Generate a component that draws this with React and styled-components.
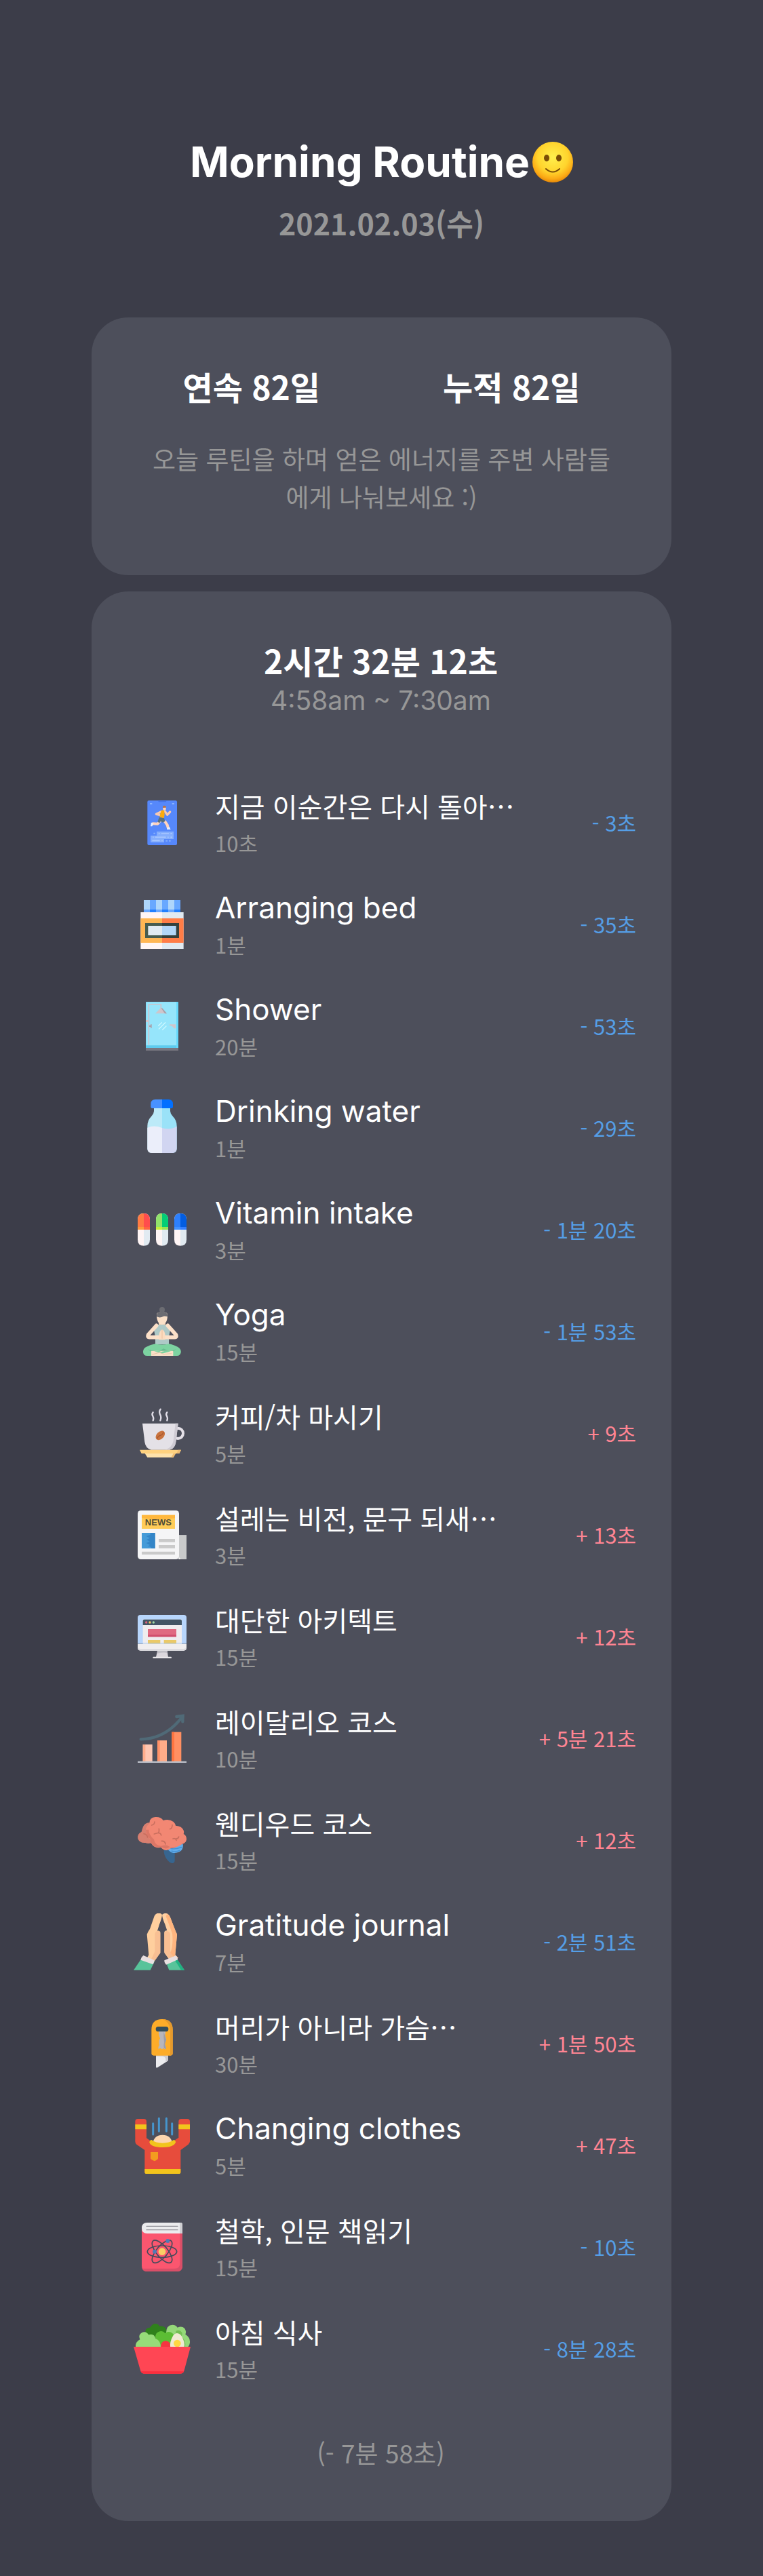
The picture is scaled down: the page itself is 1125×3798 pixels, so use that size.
import React from "react";
import styled, { createGlobalStyle } from "styled-components";

const routines = [
  { icon: "poster", title: "지금 이순간은 다시 돌아⋯", time: "10초", diff: "- 3초" },
  { icon: "jar", title: "Arranging bed", latin: true, time: "1분", diff: "- 35초" },
  { icon: "shower", title: "Shower", latin: true, time: "20분", diff: "- 53초" },
  { icon: "bottle", title: "Drinking water", latin: true, time: "1분", diff: "- 29초" },
  { icon: "pills", title: "Vitamin intake", latin: true, time: "3분", diff: "- 1분 20초" },
  { icon: "yoga", title: "Yoga", latin: true, time: "15분", diff: "- 1분 53초" },
  { icon: "coffee", title: "커피/차 마시기", time: "5분", diff: "+ 9초" },
  { icon: "news", title: "설레는 비전, 문구 되새⋯", time: "3분", diff: "+ 13초" },
  { icon: "monitor", title: "대단한 아키텍트", time: "15분", diff: "+ 12초" },
  { icon: "chart", title: "레이달리오 코스", time: "10분", diff: "+ 5분 21초" },
  { icon: "brain", title: "웬디우드 코스", time: "15분", diff: "+ 12초" },
  { icon: "pray", title: "Gratitude journal", latin: true, time: "7분", diff: "- 2분 51초" },
  { icon: "cutter", title: "머리가 아니라 가슴⋯", time: "30분", diff: "+ 1분 50초" },
  { icon: "clothes", title: "Changing clothes", latin: true, time: "5분", diff: "+ 47초" },
  { icon: "book", title: "철학, 인문 책읽기", time: "15분", diff: "- 10초" },
  { icon: "salad", title: "아침 식사", time: "15분", diff: "- 8분 28초" },
];

const icons = {
  poster: (
    <>
      <rect x="61" y="28" width="131" height="197" rx="6" fill="#5688fb" />
      <path d="M107 28h40l-4 6h-32z" fill="#4372e6" />
      <path d="M72 39h10v6H72zM170 39h10v6h-10z" fill="#8ab4ff" />
      <path d="M102 165h75v33h-42v15H75v-30h27zM88 170h8v6h-8zM142 203h8v6h-8zM156 203h8v6h-8z" fill="#85aefc" />
      <path d="M110 174h6M122 174h34M163 174h8M85 190h4M95 190h48M150 190h5M163 190h8M82 205h34M124 205h4" stroke="#a9c8ff" strokeWidth="5" />
      <path d="M121 78l-21 10 14 3M139 76l10 15 12-13" fill="none" stroke="#f7c9b0" strokeWidth="10" strokeLinecap="round" strokeLinejoin="round" />
      <path d="M119 115l-12 16-25-1M137 118l12 18 4 15" fill="none" stroke="#ffd3bd" strokeWidth="12" strokeLinejoin="round" />
      <path d="M123 71l12-1 2 20-3 16-19-4 4-20z" fill="#fdab0b" />
      <path d="M113 102l22 4 4 14-11 5-8-6-5 8-9-5z" fill="#58707e" />
      <rect x="130" y="53" width="13" height="18" rx="5" fill="#ffd3bd" />
      <path d="M129 60v-6q7-8 15 1v4z" fill="#b5734c" />
      <path d="M78 125l11 4-7 13h-7zM148 147l11-2 5 11h-17z" fill="#e7efff" />
    </>
  ),
  jar: (
    <>
      <path d="M45 18h162v54H45z" fill="#68a8ff" />
      <path d="M45 18h27v54H45zM99 18h27v54H99zM153 18h27v54h-27z" fill="#aed6fb" />
      <path d="M45 60h162v12H45z" fill="#2280ff" />
      <path d="M45 60h27v12H45zM99 60h27v12H99zM153 60h27v12h-27z" fill="#69a8ff" />
      <path d="M31 72h95v162H31z" fill="#fff5f5" />
      <path d="M126 72h95v162h-95z" fill="#e1eaf1" />
      <path d="M31 99h95v108H31z" fill="#ffb654" />
      <path d="M126 99h95v108h-95z" fill="#ff7d47" />
      <path d="M51 120h75v66H51z" fill="#475c4f" />
      <path d="M126 120h75v66h-75z" fill="#34413d" />
      <path d="M64 132h62v42H64z" fill="#e1eaf1" />
      <path d="M126 132h62v42h-62z" fill="#b2d7f8" />
    </>
  ),
  shower: (
    <>
      <rect x="54" y="18" width="144" height="216" rx="3" fill="#5ecbee" />
      <path d="M55 19h134v192H55z" fill="#96e5fb" />
      <path d="M189 19h8v203h-8z" fill="#68d9fb" />
      <path d="M54 222h144v12H54z" fill="#787781" />
      <path d="M67 208V30h54v18" fill="none" stroke="#ccc4cc" strokeWidth="5" />
      <path d="M121 44l25 26H96z" fill="#cfc5cb" />
      <path d="M121 44l7 3 19 23h-9z" fill="#a99fa8" />
      <path d="M159 118h27v18h-8q-3-11-19-13zM54 99h10v9H54z" fill="#cfc5cb" />
      <path d="M69 122h6v-4h5v16h-5v-5h-6z" fill="#a99fa8" />
      <path d="M110 124l14-14M112 138l28-28M128 142l16-16" stroke="#ccf7ff" strokeWidth="4" strokeLinecap="round" />
    </>
  ),
  bottle: (
    <>
      <path d="M90 34h36v203H81q-20 0-20-20V117q0-25 18-43 11-11 11-22z" fill="#bceaf8" />
      <path d="M126 34h36v18q0 11 11 22 18 18 18 43v100q0 20-20 20h-45z" fill="#9ae2f8" />
      <path d="M61 125q29-13 65 1v111H81q-20 0-20-20z" fill="#ebeefa" />
      <path d="M126 126q38 10 65-7v98q0 20-20 20h-45z" fill="#d1d5f1" />
      <path d="M96 0h30v39H82q-6 0-6-7V20Q76 0 96 0z" fill="#4892ff" />
      <path d="M126 0h28q20 0 20 20v12q0 7-6 7h-42z" fill="#0270ff" />
    </>
  ),
  pills: (
    <>
      {[
        ["#ff7b43", "#ff4d4d", "#ff9a3d", "#ff6540"],
        ["#91e36b", "#04ce76", "#c5f03c", "#99e552"],
        ["#2d80fd", "#035de0", "#4292ff", "#347fff"],
      ].map(([left, right, bandLeft, bandRight], i) => (
        <g key={left} transform={`translate(${18 + i * 81} 54)`}>
          <path d="M27 0v143Q0 143 0 116V27Q0 0 27 0z" fill="#fff5f5" />
          <path d="M27 0v143q27 0 27-27V27Q54 0 27 0z" fill="#e1eaf1" />
          <path d="M27 0v60H0V27Q0 0 27 0z" fill={left} />
          <path d="M27 0v60h27V27Q54 0 27 0z" fill={right} />
          <path d="M0 60h27v12H0z" fill={bandLeft} />
          <path d="M27 60h27v12H27z" fill={bandRight} />
        </g>
      ))}
    </>
  ),
  yoga: (
    <>
      <circle cx="126" cy="30" r="12" fill="#6b6c72" />
      <path d="M111 86h30v16h-30z" fill="#f4ceb2" />
      <path d="M98 96h56l10 15-8 38v35H96v-35l-8-38z" fill="#aec9c7" />
      <path d="M101 100L65 140q-5 12 5 12h48M151 100l36 40q5 12-5 12h-48" fill="none" stroke="#fce0c8" strokeWidth="17" strokeLinecap="round" />
      <path d="M126 118q-13 6-14 28v17h28v-17q-1-22-14-28z" fill="#fbdcc0" />
      <path d="M126 118v40" stroke="#ebc09c" strokeWidth="3" />
      <path d="M102 52q0-12 24-13 24 1 24 14 0 27-11 38-13 10-26 0-11-11-11-39z" fill="#fae0c8" />
      <path d="M102 60q-2-22 24-22t24 22q-10-2-18-1-16 10-30 1z" fill="#6b6c72" />
      <path d="M96 181q30 7 60 0 19 3 40 14 16 11 13 25-3 14-17 14H60q-16 0-18-16-1-15 13-23 20-11 41-14z" fill="#7dd3a1" />
      <path d="M63 205q45 17 69-3 28 17 56 3l-13 10H78z" fill="#67bd8f" />
      <path d="M78 212h97v22H78z" fill="#fae0c8" />
      <path d="M91 214l30-1-12 6 31-7 25 2-39 10z" fill="#7dd3a1" />
      <path d="M82 228l35-9 15 8 36-3" fill="none" stroke="#e8c7aa" strokeWidth="3" />
    </>
  ),
  coffee: (
    <>
      <circle cx="196" cy="127" r="23" fill="none" stroke="#e5e1e8" strokeWidth="12" />
      <path d="M39 83h158l-10 82q-4 29-28 35H78q-25-6-29-35z" fill="#e4e1e7" />
      <path d="M185 83h12l-10 82q-4 29-28 35h-19q30-10 36-40z" fill="#cfcbd3" />
      <path d="M27 200h183l-8 16H35z" fill="#ffd27f" />
      <path d="M50 216h136l-10 17H61z" fill="#fee2ab" />
      <path d="M176 216h10l-10 17h-10zM197 200h13l-8 16h-12z" fill="#eebb72" />
      <ellipse cx="118" cy="136" rx="24" ry="16" transform="rotate(-45 118 136)" fill="#c9733e" />
      <path d="M104 151q3-12 14-15t14-15" fill="none" stroke="#a9562f" strokeWidth="4" />
      <path d="M86 34q-7 8-1 17 5 8 1 19M119 20q-8 10-2 23 7 12 1 27M148 34q-7 8-1 17 5 8 1 19" fill="none" stroke="#e1dee8" strokeWidth="7" strokeLinecap="round" />
    </>
  ),
  news: (
    <>
      <path d="M197 127h37v107h-37z" fill="#c9cacb" />
      <rect x="18" y="18" width="183" height="216" rx="14" fill="#f5f5f6" />
      <path d="M201 210v24h15q-15 0-15-24z" fill="#f5f5f6" />
      <path d="M201 127h33v89q0 18-18 18-15 0-15-15z" fill="#c9cacb" />
      <path d="M36 38h147v61H36z" fill="#ffcc57" />
      <path d="M36 38h147v13q-60 15-147 0z" fill="#ffb83e" />
      <text x="109" y="83" textAnchor="middle" fontFamily="Liberation Sans, sans-serif" fontWeight="700" fontSize="39" fill="#4d4c36">NEWS</text>
      <path d="M36 117h59v69H36z" fill="#459bd8" />
      <path d="M74 117h21v69H80l-7-8h-10l9-8-16-8 16-6-14-9 14-7-16-8 18-7z" fill="#3385c7" />
      <path d="M111 144h72v14h-72zM111 171h72v14h-72zM36 200h147v13H36z" fill="#cacaca" />
    </>
  ),
  monitor: (
    <>
      <path d="M106 185h42l5 32h-54z" fill="#dbd7dd" />
      <path d="M106 185h42l3 15q-12-7-46 0z" fill="#c0bfc6" />
      <rect x="85" y="215" width="83" height="7" rx="3" fill="#e9e7ea" />
      <path d="M30 30h192q12 0 12 12v115H18V42q0-12 12-12z" fill="#b8d6fc" />
      <path d="M41 50h172v110H41z" fill="#efedef" />
      <path d="M47 50h160q6 0 6 6v19H41V56q0-6 6-6z" fill="#425564" />
      <circle cx="56" cy="63" r="5" fill="#dd617a" />
      <circle cx="72" cy="63" r="5" fill="#f0ca61" />
      <circle cx="88" cy="63" r="5" fill="#9fdba4" />
      <path d="M63 93h126v34H63z" fill="#e06a81" />
      <path d="M63 118h126v9H63z" fill="#d04e6c" />
      <path d="M63 141h55v19H63zM134 141h55v19h-55z" fill="#eac968" />
      <path d="M18 153h216v5H18z" fill="#a3c4ee" opacity="0.6" />
      <path d="M18 158h216v17q0 13-13 13H31q-13 0-13-13z" fill="#f0eef0" />
      <path d="M18 175q3 5 13 5h190q10 0 13-5 0 13-13 13H31q-13 0-13-13z" fill="#dcdbe0" />
    </>
  ),
  chart: (
    <>
      <path d="M41 153h42v76H41z" fill="#ffc7b2" />
      <path d="M105 135h42v94h-42z" fill="#ffac89" />
      <path d="M169 98h42v131h-42z" fill="#ff8f62" />
      <path d="M41 153h11v76H41z" fill="#ffad8c" />
      <path d="M105 135h11v94h-11z" fill="#ff9167" />
      <path d="M169 98h11v131h-11z" fill="#ff743f" />
      <path d="M18 227h216v7H18z" fill="#bdc1ca" />
      <path d="M32 130q106-2 179-94M190 30l28-4-1 26" fill="none" stroke="#506a77" strokeWidth="13" strokeLinecap="round" />
    </>
  ),
  brain: (
    <>
      <path d="M134 170q30-11 48 7v40q-1 13-14 11-11-3-22-19-13-18-12-39z" fill="#37658f" />
      <path d="M149 164q20-20 69-20 4 24-16 34-32 15-53-14z" fill="#63adec" />
      <path d="M162 162q20 7 52-5M167 174q18 6 39-3" fill="none" stroke="#4390d2" strokeWidth="4" />
      <path d="M73 48q-24 1-31 19-5 13-7 22-21 11-16 31 8 20 33 18 17 8 36-4l29-40z" fill="#d87f70" />
      <path d="M71 52Q68 27 96 24q24-2 35 15 25-9 45 6 8 7 10 17 28 2 35 21 3 8 0 16 14 7 13 25-3 16-20 20-22 16-49 18-23 20-44-4-29 6-40-13-9-12-5-22-21-13-22-34-3-21 17-37z" fill="#f28773" />
      <path d="M67 80q1 23 23 43 4 27 31 29 15-5 27-3 18 14 43 5-15 13-31 3-16 13-39-1-29 5-40-11-9-11-5-22-22-17-22-43z" fill="#dc7767" />
      <path d="M80 60q12-2 13-15M112 76q2 14-3 18l-18 5M109 94q12 1 13 11M161 77q10-3 10-18M45 98q14 2 17 16M124 130q15-1 17 14M189 127q-3-11-15-7M188 120q10 0 12-9" fill="none" stroke="#c86e5e" strokeWidth="5" strokeLinecap="round" />
    </>
  ),
  pray: (
    <>
      <path d="M104 0q14-4 22 6-1 15-12 43l-9 28q8-3 13 5v93l-30 42-29-19 8-14-8-91q4-12 13-24L92 11q4-8 12-11z" fill="#ffcf9e" />
      <path d="M126 6q10-10 25-4 7 4 12 18l22 58q5 8 7 16l-8 89 13 14-31 19-30-41V82q3-7 12-6l-9-27q-12-28-13-43z" fill="#ffd0a1" />
      <path d="M94 91q3-13 14-13 9 1 10 9v88l-30 42-13-8 19-40zM136 88q1-9 11-10 12 1 15 13v75l20 43-13 8-33-46z" fill="#f8bf93" />
      <path d="M148 3q9 2 15 17l29 74-8 89 13 14-15 5-19-28q13-34 8-85L143 13z" fill="#ffb57f" />
      <path d="M32 204L0 251h74l19-39z" fill="#58c39a" />
      <path d="M142 213l15 38h68l-32-47z" fill="#58c39a" />
      <path d="M182 206l28 45h15l-32-47z" fill="#20b282" />
      <path d="M43 186l48 21q2 4-5 19l-55-20q1-11 12-20zM136 208l50-21q10 6 9 18l-51 22q-10-12-8-19z" fill="#e8dfe0" />
    </>
  ),
  cutter: (
    <>
      <path d="M99 172h54v27q-1 4-5 6l-42 27q-7 4-7-4z" fill="#ececef" />
      <path d="M99 172h54v27q-1 4-11 9v-13q0-11-16-13H99z" fill="#cccbd0" />
      <path d="M79 65q0-47 47-47t47 47v104q0 10-10 10H89q-10 0-10-10z" fill="#fdac29" />
      <path d="M130 18q43 2 43 47v104q0 10-10 10h-9q8-2 8-12V65q-2-32-32-47z" fill="#e59a2e" />
      <path d="M111 70h31l-3 20 6 16-7 22 6 17-4 7-7-6-7 5-9-5-7 5q-3-10 4-19-5-14 3-29-7-13-6-33z" fill="#b8b6bc" />
      <path d="M133 73l7 22 5 14-7 20 6 17-4 5-6-6q-2-13 1-25-3-27-2-47z" fill="#9e9da5" />
      <rect x="98" y="51" width="56" height="22" rx="11" fill="#354d5a" />
    </>
  ),
  clothes: (
    <>
      <path d="M86 29v49M112 7v57M145 7v57M170 29v49" stroke="#4695cd" strokeWidth="9" strokeLinecap="round" />
      <path d="M7 21q0-12 12-12h26q12 0 12 12v73l24 17q47 22 91-1l27-18V21q0-12 12-12h26q12 0 12 12v88q0 7-7 13l-34 25v100H49V147l-36-25q-6-5-6-13z" fill="#e74c3c" />
      <path d="M85 116q6-36 43-36t43 36l-18 10h-50z" fill="#fdd5ae" />
      <path d="M7 34h50v21H7zM199 34h50v21h-50zM49 231h159v14q0 7-8 7H57q-8 0-8-7z" fill="#f2c41c" />
      <path d="M80 102q-10 1-10 12 8 21 58 21 48 0 58-21 0-11-9-12-18 14-49 14-31 0-48-14z" fill="#f2c41c" />
      <path d="M75 156h33v28q0 5-16 12-17-8-17-12z" fill="#f39c1f" />
    </>
  ),
  book: (
    <>
      <path d="M36 40h180v169q0 25-25 25H61q-25 0-25-25z" fill="#fb566f" />
      <path d="M205 60h11v149q0 25-25 25H61q-18 0-23-13h144q23 0 23-23z" fill="#d94f68" />
      <path d="M60 18h147q9 0 9 9v39H60q-24 0-24-24t24-24z" fill="#ececee" />
      <path d="M204 18h3q9 0 9 9v39h-12z" fill="#cfcfd3" />
      <path d="M57 34h138M57 50h138" stroke="#929198" strokeWidth="4" strokeLinecap="round" />
      <g fill="none" stroke="#464b5c" strokeWidth="5">
        <ellipse cx="126" cy="146" rx="65" ry="26" />
        <ellipse cx="126" cy="146" rx="62" ry="25" transform="rotate(50 126 146)" />
        <ellipse cx="126" cy="146" rx="62" ry="25" transform="rotate(-50 126 146)" />
      </g>
      <circle cx="126" cy="146" r="16" fill="#f8cf65" />
      <circle cx="93" cy="146" r="9" fill="#4f7bb5" />
      <circle cx="151" cy="99" r="9" fill="#4f7bb5" />
    </>
  ),
  salad: (
    <>
      <path d="M52 49q0-15 20-17 10-17 25-17 13 0 17 11 25-4 32 18v30H56z" fill="#2f811c" />
      <path d="M144 54q1-33 28-34 15 0 22 12 19-8 31 3 10 12 4 27 22 14 20 36-2 15-11 22h-94z" fill="#95d879" />
      <path d="M187 47q16-8 27 7 3 13-5 20 24 9 19 46h-40z" fill="#75be54" />
      <path d="M96 76q0-22 20-27 15-3 23 8 19-13 36 3 8 9 4 25v35h-72z" fill="#5cbd34" />
      <path d="M9 120q-3-24 19-35-8-20 6-29 20-11 32 8 25-8 31 16 23 10 23 40z" fill="#96dc79" />
      <path d="M120 118q0-25 22-27 22 2 22 27z" fill="#f43541" />
      <path d="M163 120q-4-17 4-36 9-26 25-27 19 2 27 27 9 18 4 36z" fill="#f0ead2" />
      <circle cx="193" cy="102" r="16" fill="#ffd843" />
      <path d="M0 117h252l-28 104q-4 15-18 15H48q-14 0-18-15z" fill="#ff4654" />
      <path d="M31 226h192q-5 10-17 10H48q-12 0-17-10z" fill="#fb2e3d" />
    </>
  ),
};

function Smile() {
  return (
    <SmileIcon viewBox="0 0 60 60" role="img" aria-label="smile">
      <defs>
        <radialGradient id="smile-face" cx="50%" cy="38%" r="62%">
          <stop offset="0" stopColor="#fff04d" />
          <stop offset="0.6" stopColor="#ffd42d" />
          <stop offset="0.85" stopColor="#fbab16" />
          <stop offset="1" stopColor="#e88a08" />
        </radialGradient>
      </defs>
      <circle cx="30" cy="30" r="30" fill="url(#smile-face)" />
      <ellipse cx="21" cy="24" rx="4" ry="5" fill="#7b4d06" />
      <ellipse cx="39" cy="24" rx="4" ry="5" fill="#7b4d06" />
      <path d="M20 40q10 9 20 0" fill="none" stroke="#7b4d06" strokeWidth="2" strokeLinecap="round" />
    </SmileIcon>
  );
}

function Routine({ icon, title, latin, time, diff }) {
  return (
    <RoutineItem>
      <RoutineIcon viewBox="0 0 252 252" aria-hidden="true">
        {icons[icon]}
      </RoutineIcon>
      <RoutineText>
        <RoutineTitle $latin={latin}>{title}</RoutineTitle>
        <RoutineTime>{time}</RoutineTime>
      </RoutineText>
      <Diff $over={diff.startsWith("+")}>{diff}</Diff>
    </RoutineItem>
  );
}

function App() {
  return (
    <Page lang="ko">
      <GlobalStyle />
      <Header>
        <Title>
          Morning Routine
          <Smile />
        </Title>
        <DateText>2021.02.03(수)</DateText>
      </Header>
      <SummaryCard>
        <Stats>
          <Stat>연속 82일</Stat>
          <Stat>누적 82일</Stat>
        </Stats>
        <Message>
          오늘 루틴을 하며 얻은 에너지를 주변 사람들에게 나눠보세요 :)
        </Message>
      </SummaryCard>
      <RoutineCard>
        <Total>2시간 32분 12초</Total>
        <Range>4:58am ~ 7:30am</Range>
        <RoutineList>
          {routines.map((routine) => (
            <Routine key={routine.icon} {...routine} />
          ))}
        </RoutineList>
        <TotalDiff>(- 7분 58초)</TotalDiff>
      </RoutineCard>
    </Page>
  );
}

const korean = `"Noto Sans CJK KR", sans-serif`;
const latinFont = `Inter, "Noto Sans CJK KR", sans-serif`;

const GlobalStyle = createGlobalStyle`
  * {
    box-sizing: border-box;
  }
  body {
    margin: 0;
    background-color: #3c3d49;
  }
  h1, h2, p, ul {
    margin: 0;
    padding: 0;
  }
`;

const Page = styled.main`
  min-height: 100vh;
  padding: 204px 12% 81px;
  background-color: #3c3d49;
  color: #ffffff;
  font-family: ${korean};
`;

const Header = styled.header`
  text-align: center;
  margin-bottom: 108px;
`;

const Title = styled.h1`
  display: flex;
  align-items: center;
  justify-content: center;
  gap: 4px;
  font-family: ${latinFont};
  font-size: 62px;
  font-weight: 700;
  line-height: 70px;
`;

const SmileIcon = styled.svg`
  width: 60px;
  height: 60px;
`;

const DateText = styled.p`
  margin-top: 22px;
  color: #979797;
  font-size: 43px;
  font-weight: 700;
  line-height: 64px;
`;

const Card = styled.section`
  background-color: #4d4f5b;
  border-radius: 54px;
  text-align: center;
`;

const SummaryCard = styled(Card)`
  padding: 66px 44px 88px;
`;

const Stats = styled.div`
  display: grid;
  grid-template-columns: 1fr 1fr;
`;

const Stat = styled.h2`
  font-size: 48px;
  font-weight: 700;
  line-height: 70px;
`;

const Message = styled.p`
  margin-top: 44px;
  padding: 0 36px;
  color: #979797;
  font-size: 37px;
  line-height: 56px;
`;

const RoutineCard = styled(Card)`
  margin-top: 24px;
  padding: 66px 52px 73px 62px;
`;

const Total = styled(Stat)`
  margin-right: 12px;
`;

const Range = styled.p`
  margin-right: 12px;
  color: #979797;
  font-family: ${latinFont};
  font-size: 39px;
  line-height: 50px;
`;

const RoutineList = styled.ul`
  margin-top: 80px;
  list-style: none;
`;

const RoutineItem = styled.li`
  display: flex;
  align-items: center;
  height: 150px;
  text-align: left;
`;

const RoutineIcon = styled.svg`
  flex-shrink: 0;
  width: 84px;
  height: 84px;
  margin-right: 36px;
`;

const RoutineText = styled.div`
  flex: 1;
  min-width: 0;
`;

const RoutineTitle = styled.p`
  font-family: ${(props) => (props.$latin ? latinFont : korean)};
  font-size: ${(props) => (props.$latin ? "44px" : "40px")};
  line-height: 54px;
`;

const RoutineTime = styled.p`
  margin-top: 6px;
  color: #979797;
  font-size: 31px;
  line-height: 44px;
`;

const Diff = styled.span`
  flex-shrink: 0;
  color: ${(props) => (props.$over ? "#ff8593" : "#559ee6")};
  font-size: 31px;
  line-height: 44px;
`;

const TotalDiff = styled.p`
  margin: 50px 12px 0 0;
  color: #979797;
  font-size: 37px;
  line-height: 56px;
`;

export default App;
